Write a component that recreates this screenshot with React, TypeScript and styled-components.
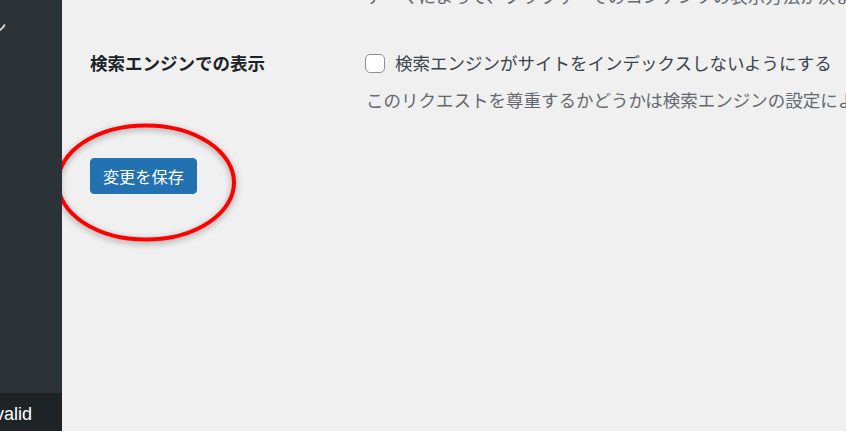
import React from "react";
import styled, { createGlobalStyle } from "styled-components";

const Global = createGlobalStyle`
  html, body { margin: 0; padding: 0; }
  body {
    width: 846px;
    height: 431px;
    overflow: hidden;
    background: #f0f0f1;
    font-family: "Noto Sans CJK JP", "Noto Sans", sans-serif;
  }
`;

const Page = styled.div`
  display: flex;
  width: 846px;
  height: 431px;
  overflow: hidden;
`;

const Sidebar = styled.aside`
  width: 62px;
  flex: none;
  display: flex;
  flex-direction: column;
  background: #2c3338;
  overflow: hidden;
`;

const MenuFragment = styled.div`
  margin: 15px 0 0 -11px;
  color: #f0f0f1;
  font-size: 17.5px;
  line-height: 24px;
  white-space: nowrap;
`;

const Spacer = styled.div`
  flex: 1;
`;

const Footer = styled.div`
  height: 38px;
  background: #1d2327;
  color: #ffffff;
  font-family: "Liberation Sans", Arial, sans-serif;
  font-size: 18px;
  line-height: 42px;
  white-space: nowrap;
  overflow: hidden;
`;

const FooterText = styled.span`
  display: inline-block;
  margin-left: -5px;
`;

const Main = styled.main`
  position: relative;
  flex: 1;
  padding-left: 28px;
  display: flex;
  flex-direction: column;
  font-size: 17.5px;
  color: #3c434a;
  overflow: hidden;
`;

const TopNote = styled.p`
  margin: -16px 0 0 276px;
  line-height: 24px;
  white-space: nowrap;
  color: #646970;
`;

const SettingRow = styled.div`
  display: grid;
  grid-template-columns: 276px 1fr;
  margin-top: 43px;
`;

const Label = styled.div`
  font-weight: 700;
  color: #1d2327;
  line-height: 24px;
  white-space: nowrap;
`;

const Field = styled.div`
  display: flex;
  flex-direction: column;
  gap: 13px;
  white-space: nowrap;
`;

const CheckLine = styled.label`
  display: flex;
  align-items: center;
  gap: 10px;
  line-height: 24px;
  color: #3c434a;
`;

const Box = styled.span`
  width: 20px;
  height: 19px;
  box-sizing: border-box;
  border: 1px solid #8c8f94;
  border-radius: 5px;
  background: #ffffff;
  flex: none;
  margin-left: -1px;
`;

const Description = styled.p`
  margin: 0;
  line-height: 24px;
  color: #646970;
`;

const Actions = styled.div`
  margin-top: 46px;
`;

const SaveButton = styled.button`
  width: 107px;
  height: 36px;
  background: #2271b1;
  color: #ffffff;
  border: 1px solid #2271b1;
  border-radius: 4px;
  font-family: "Noto Sans CJK JP", sans-serif;
  font-size: 16.25px;
  padding: 0;
  cursor: pointer;
`;

const Annotation = styled.svg`
  position: absolute;
  left: -8px;
  top: 121px;
  width: 186px;
  height: 124px;
  overflow: visible;
  filter: drop-shadow(0 2px 3px rgba(0, 0, 0, 0.35));
  pointer-events: none;
`;

export default function App() {
  return (
    <>
      <Global />
      <Page>
        <Sidebar>
          <MenuFragment>ン</MenuFragment>
          <Spacer />
          <Footer>
            <FooterText>valid</FooterText>
          </Footer>
        </Sidebar>
        <Main>
          <TopNote>テーマによって、ブラウザーでのコンテンツの表示方法が決まります。</TopNote>
          <SettingRow>
            <Label>検索エンジンでの表示</Label>
            <Field>
              <CheckLine>
                <Box />
                検索エンジンがサイトをインデックスしないようにする
              </CheckLine>
              <Description>
                このリクエストを尊重するかどうかは検索エンジンの設定によります。
              </Description>
            </Field>
          </SettingRow>
          <Actions>
            <SaveButton>変更を保存</SaveButton>
          </Actions>
          <Annotation viewBox="0 0 186 124">
            <ellipse cx="92" cy="61.5" rx="88" ry="57" fill="none" stroke="#ff0000" strokeWidth="4" />
          </Annotation>
        </Main>
      </Page>
    </>
  );
}
